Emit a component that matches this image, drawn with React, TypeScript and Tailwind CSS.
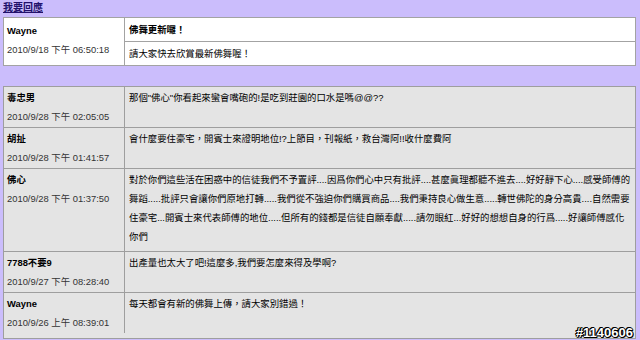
const font = { fontFamily: '"Liberation Sans", "Noto Sans CJK TC", sans-serif' };

const replies = [
  {
    name: "毒忠男",
    date: "2010/9/28 下午 02:05:05",
    lines: ["那個\"佛心\"你看起來蠻會嘴砲的!是吃到莊園的口水是嗎@@??"],
  },
  {
    name: "胡扯",
    date: "2010/9/28 下午 01:41:57",
    lines: ["會什麼要住豪宅，開賓士來證明地位!?上節目，刊報紙，救台灣阿!!收什麼費阿"],
  },
  {
    name: "佛心",
    date: "2010/9/28 下午 01:37:50",
    lines: [
      "對於你們這些活在困惑中的信徒我們不予置評....因爲你們心中只有批評....甚麼眞理都聽不進去....好好靜下心....感受師傅的",
      "舞蹈.....批評只會讓你們原地打轉.....我們從不強迫你們購買商品....我們秉持良心做生意.....轉世佛陀的身分高貴....自然需要",
      "住豪宅...開賓士來代表師傅的地位.....但所有的錢都是信徒自願奉獻.....請勿眼紅...好好的想想自身的行爲.....好讓師傅感化",
      "你們",
    ],
  },
  {
    name: "7788不要9",
    date: "2010/9/27 下午 08:28:40",
    lines: ["出產量也太大了吧!這麼多,我們要怎麼來得及學啊?"],
  },
  {
    name: "Wayne",
    date: "2010/9/26 上午 08:39:01",
    lines: ["每天都會有新的佛舞上傳，請大家別錯過！"],
  },
];

export default function App() {
  return (
    <div
      className="relative h-[340px] w-[640px] overflow-hidden bg-[#cbbdfc] text-[9.4px] leading-[19px] text-black"
      style={font}
    >
      <div className="h-[17px] pl-[3px] leading-[16px]">
        <a href="#" className="text-[10px] font-bold text-[#22116b] underline">
          我要回應
        </a>
      </div>

      {/* original post */}
      <div className="ml-[3px] mr-[4px] grid grid-cols-[121px_1fr] border border-[#a3a3a3] bg-white">
        <div className="border-r border-[#a3a3a3] px-[3px] pt-[3px]">
          <div className="font-bold">Wayne</div>
          <div className="text-[#333]">2010/9/18 下午 06:50:18</div>
        </div>
        <div>
          <div className="border-b border-[#a3a3a3] px-[4px] py-[2px] font-bold">佛舞更新囉！</div>
          <div className="px-[4px] py-[2px]">請大家快去欣賞最新佛舞喔！</div>
        </div>
      </div>

      {/* replies */}
      <div className="ml-[3px] mr-[4px] mt-[20px] border border-[#9e9e9e] bg-[#e4e4e4]">
        {replies.map((r, i) => (
          <div
            key={i}
            className={
              i === replies.length - 1
                ? "grid grid-cols-[121px_1fr] pb-[5px]"
                : "grid grid-cols-[121px_1fr] border-b border-[#9e9e9e]"
            }
          >
            <div className="border-r border-[#9e9e9e] px-[3px] py-[1px]">
              <div className="font-bold">{r.name}</div>
              <div className="text-[#333]">{r.date}</div>
            </div>
            <div className="overflow-hidden whitespace-nowrap px-[4px] pb-[5px] pt-[1px]">
              {r.lines.map((l, j) => (
                <div key={j}>{l}</div>
              ))}
            </div>
          </div>
        ))}
      </div>

      <div className="absolute bottom-[1px] right-[7px] text-[13px] font-bold leading-[13px] text-white [text-shadow:-1px_0_#000,1px_0_#000,0_-1px_#000,0_1px_#000,1px_1px_#000,-1px_-1px_#000]">
        #1140606
      </div>
    </div>
  );
}
